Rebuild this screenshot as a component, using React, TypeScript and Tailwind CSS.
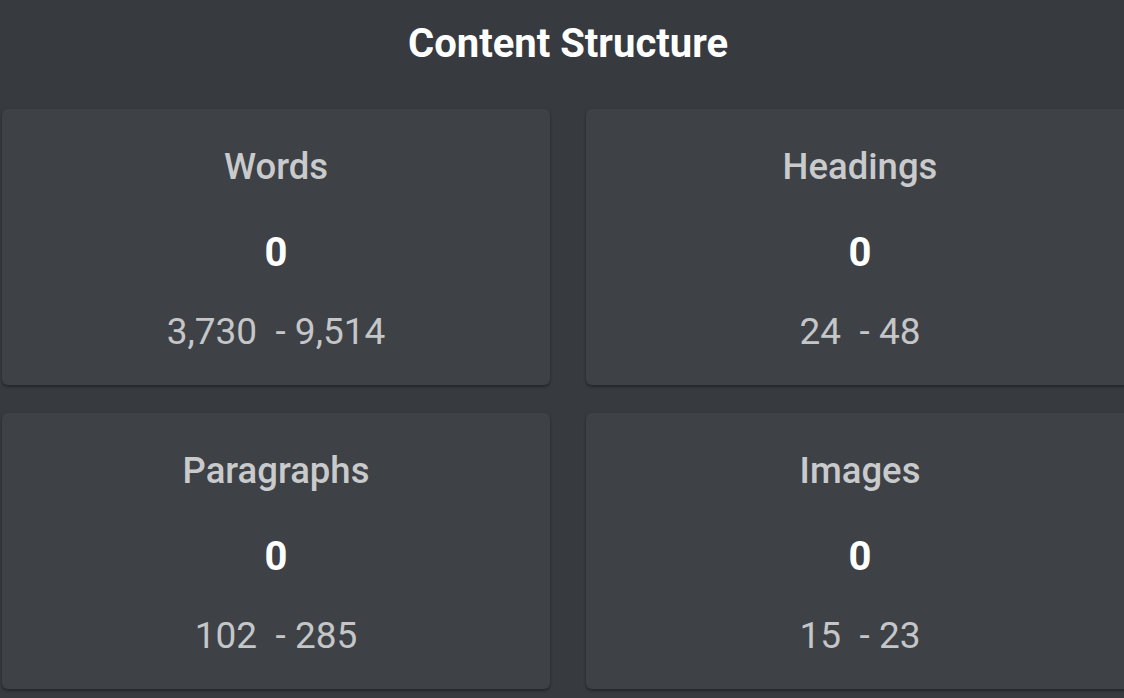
import React from "react";

const cards = [
  { label: "Words", value: "0", range: "3,730  - 9,514" },
  { label: "Headings", value: "0", range: "24  - 48" },
  { label: "Paragraphs", value: "0", range: "102  - 285" },
  { label: "Images", value: "0", range: "15  - 23" },
];

export default function App() {
  return (
    <div
      className="w-[1124px] h-[698px] overflow-hidden bg-[#373a3f]"
      style={{ fontFamily: "Roboto, 'Noto Sans', sans-serif" }}
    >
      <div className="w-[1132px] ml-[2px] pt-[24px]">
        <h1 className="text-center text-[40px] leading-[40px] font-bold text-white mb-[45px]">
          Content Structure
        </h1>
        <div className="grid grid-cols-2 gap-x-[36px] gap-y-[28px]">
          {cards.map((c) => (
            <div
              key={c.label}
              className="h-[276px] rounded-[6px] bg-[#3e4146] shadow-[0_2px_3px_rgba(0,0,0,0.35)] flex flex-col items-center pt-[38px]"
            >
              <div className="text-[36.5px] leading-[40px] font-medium text-[#c9cacc]">
                {c.label}
              </div>
              <div className="mt-[46px] text-[40px] leading-[40px] font-bold text-white">
                {c.value}
              </div>
              <div className="mt-[39px] text-[37px] leading-[40px] text-[#c5c6c8] whitespace-pre">
                {c.range}
              </div>
            </div>
          ))}
        </div>
      </div>
    </div>
  );
}
